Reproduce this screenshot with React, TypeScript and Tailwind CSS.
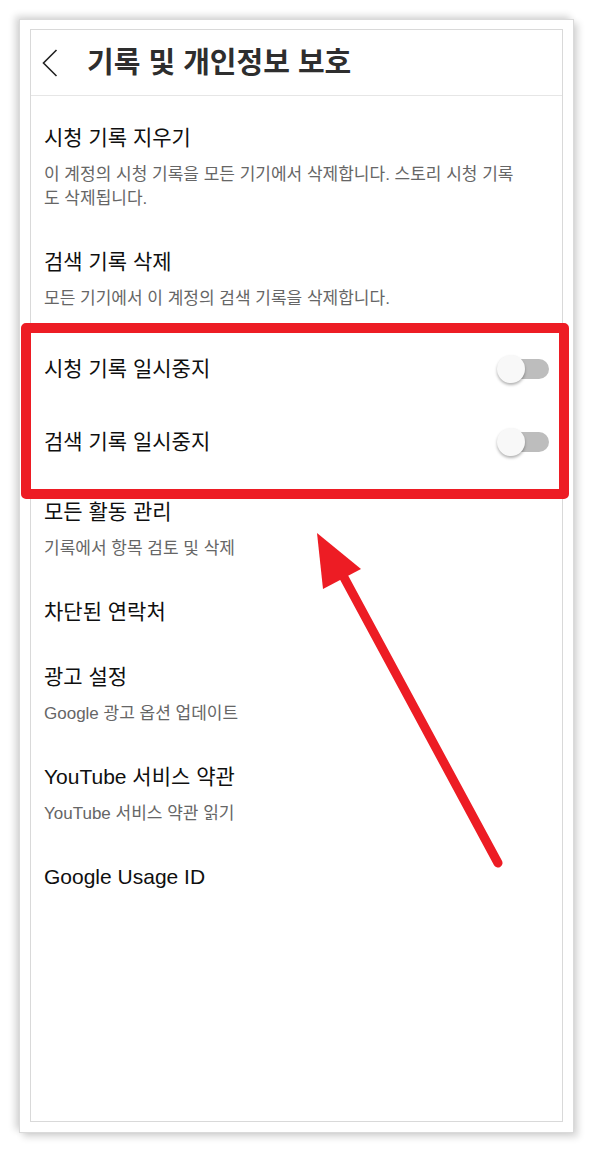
const font = { fontFamily: '"Liberation Sans", "Noto Sans CJK KR", sans-serif' }

interface Item {
  title: string
  desc?: string
}

const topItems: Item[] = [
  { title: '시청 기록 지우기', desc: '이 계정의 시청 기록을 모든 기기에서 삭제합니다. 스토리 시청 기록도 삭제됩니다.' },
  { title: '검색 기록 삭제', desc: '모든 기기에서 이 계정의 검색 기록을 삭제합니다.' },
]

const bottomItems: Item[] = [
  { title: '모든 활동 관리', desc: '기록에서 항목 검토 및 삭제' },
  { title: '차단된 연락처' },
  { title: '광고 설정', desc: 'Google 광고 옵션 업데이트' },
  { title: 'YouTube 서비스 약관', desc: 'YouTube 서비스 약관 읽기' },
  { title: 'Google Usage ID' },
]

function Row({ item }: { item: Item }) {
  return (
    <div className="pt-[18px] pb-[19px]">
      <div className="text-[21px] leading-[28px] text-[#0f0f0f]">{item.title}</div>
      {item.desc && (
        <div className="mt-[11px] max-w-[478px] text-[17px] leading-[24px] text-[#666666]">{item.desc}</div>
      )}
    </div>
  )
}

function Toggle() {
  return (
    <div className="relative w-[52px] h-[28px]">
      <div className="absolute right-0 top-[4px] w-[44px] h-[20px] rounded-full bg-[#bdbdbd]" />
      <div className="absolute left-0 top-0 w-[28px] h-[28px] rounded-full bg-[#f8f8f8] shadow-[0_2px_3px_rgba(0,0,0,0.3)]" />
    </div>
  )
}

function ToggleRow({ title }: { title: string }) {
  return (
    <div className="h-[73px] flex items-center justify-between">
      <span className="text-[21px] leading-[28px] text-[#0f0f0f]">{title}</span>
      <Toggle />
    </div>
  )
}

export default function App() {
  return (
    <div className="relative w-[592px] h-[1152px] bg-white overflow-hidden" style={font}>
      {/* paper frame */}
      <div className="ml-[19px] mt-[19px] w-[555px] h-[1114px] border border-[#dadada] bg-white pt-[9px] px-[10px] pb-[10px] shadow-[-4px_-3px_7px_rgba(0,0,0,0.16),4px_4px_7px_rgba(0,0,0,0.16)]">
        <div className="h-full border border-[#d9d9d9] bg-white">
          {/* header */}
          <div className="h-[66px] flex items-center border-b border-[#e6e6e6] pl-[10px]">
            <svg width="18" height="30" viewBox="0 0 18 30" fill="none" className="shrink-0">
              <path d="M15.5 2 L2.5 15 L15.5 28" stroke="#222" strokeWidth="1.6" />
            </svg>
            <h1 className="ml-[28px] text-[29px] leading-[36px] font-bold text-[#2e2e2e]">기록 및 개인정보 보호</h1>
          </div>

          <div className="px-[13px] pt-[10px]">
            {topItems.map((it) => (
              <Row key={it.title} item={it} />
            ))}
            <div className="py-[2px]">
              <ToggleRow title="시청 기록 일시중지" />
              <ToggleRow title="검색 기록 일시중지" />
            </div>
            {bottomItems.map((it) => (
              <Row key={it.title} item={it} />
            ))}
          </div>
        </div>
      </div>

      {/* annotation: red box */}
      <div className="absolute left-[21px] top-[323px] w-[548px] h-[176px] border-[10px] border-[#ed1c24] rounded-[5px]" />

      {/* annotation: arrow */}
      <svg className="absolute left-0 top-0" width="592" height="1152" viewBox="0 0 592 1152">
        <line x1="498" y1="863" x2="340" y2="570" stroke="#ed1c24" strokeWidth="9" strokeLinecap="round" />
        <polygon points="317,533 361,569 323,589" fill="#ed1c24" />
      </svg>
    </div>
  )
}
